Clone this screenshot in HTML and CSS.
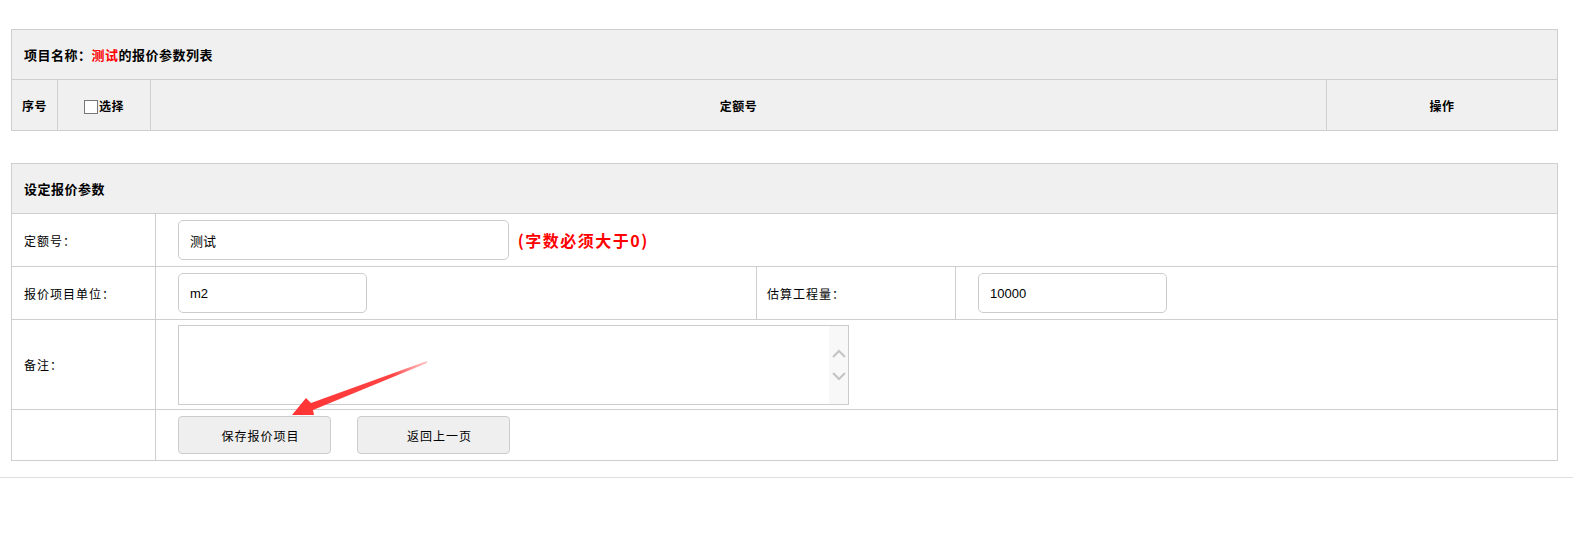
FILE: index.html
```html
<!DOCTYPE html>
<html lang="zh-CN">
<head>
    <meta charset="UTF-8">
    <title>报价参数</title>
    <link rel="stylesheet" href="styles.css">
</head>
<body>
    <div class="page">
        <table class="grid list">
            <colgroup>
                <col class="w-no">
                <col class="w-sel">
                <col>
                <col class="w-op">
            </colgroup>
            <tr>
                <th class="caption" colspan="4">项目名称：<span class="red">测试</span>的报价参数列表</th>
            </tr>
            <tr class="head">
                <th>序号</th>
                <th><input type="checkbox" class="chk">选择</th>
                <th>定额号</th>
                <th>操作</th>
            </tr>
        </table>

        <table class="grid form">
            <colgroup>
                <col class="w-label">
                <col class="w-unit">
                <col class="w-label2">
                <col>
            </colgroup>
            <tr>
                <th class="caption" colspan="4">设定报价参数</th>
            </tr>
            <tr class="row">
                <td class="label">定额号：</td>
                <td class="field" colspan="3">
                    <input type="text" class="txt txt-long" value="测试">
                    <span class="hint">(字数必须大于0)</span>
                </td>
            </tr>
            <tr class="row">
                <td class="label">报价项目单位：</td>
                <td class="field"><input type="text" class="txt txt-short" value="m2"></td>
                <td class="label label2">估算工程量：</td>
                <td class="field"><input type="text" class="txt txt-short" value="10000"></td>
            </tr>
            <tr class="row-tall">
                <td class="label">备注：</td>
                <td class="field" colspan="3">
                    <div class="memo">
                        <textarea class="memo-text"></textarea>
                        <div class="memo-bar">
                            <svg width="14" height="9" viewBox="0 0 14 9"><path d="M1 8 L7 2 L13 8" fill="none" stroke="#c4c4c4" stroke-width="2"/></svg>
                            <svg width="14" height="9" viewBox="0 0 14 9"><path d="M1 1 L7 7 L13 1" fill="none" stroke="#c4c4c4" stroke-width="2"/></svg>
                        </div>
                    </div>
                </td>
            </tr>
            <tr class="row-btn">
                <td class="label"></td>
                <td class="field" colspan="3">
                    <div class="actions">
                        <button class="btn">保存报价项目</button>
                        <button class="btn">返回上一页</button>
                    </div>
                </td>
            </tr>
        </table>
    </div>
    <div class="footer"></div>

    <!-- annotation arrow drawn over the form -->
    <svg class="arrow" width="150" height="70" viewBox="285 355 150 70">
        <defs>
            <linearGradient id="fade" x1="292" y1="415" x2="427" y2="361" gradientUnits="userSpaceOnUse">
                <stop offset="0" stop-color="#ff3434"/>
                <stop offset="0.75" stop-color="#ff4444"/>
                <stop offset="1" stop-color="#ff8a8a" stop-opacity="0.5"/>
            </linearGradient>
        </defs>
        <polygon fill="url(#fade)" points="427,361 311,403 306,398 292,415 314,415 313,410 427,363"/>
    </svg>
</body>
</html>
```

FILE: styles.css
```css
body {
    margin: 0;
    padding: 0;
    font-family: "Noto Sans CJK SC", "Liberation Sans", sans-serif;
    font-size: 12px;
    color: #000;
    background: #fff;
}
.page {
    padding: 29px 15px 0 11px;
}
.grid {
    width: 100%;
    border-collapse: collapse;
    table-layout: fixed;
}
.grid th,
.grid td {
    border: 1px solid #cfcfcf;
    padding: 0;
    vertical-align: middle;
}
.grid th {
    background: #f0f0f0;
    font-weight: bold;
    font-size: 12px;
    letter-spacing: 0.5px;
}
.caption {
    height: 49px;
    text-align: left;
    padding-left: 12px !important;
    font-size: 13px !important;
    letter-spacing: 0.5px;
}
.red {
    color: #f00;
}
.head th {
    height: 50px;
    text-align: center;
}
.w-no {
    width: 46px;
}
.w-sel {
    width: 93px;
}
.w-op {
    width: 231px;
}
.w-label {
    width: 144px;
}
.w-unit {
    width: 601px;
}
.w-label2 {
    width: 199px;
}
.chk {
    appearance: none;
    -webkit-appearance: none;
    width: 14px;
    height: 14px;
    margin: 0 1px 0 0;
    border: 1px solid #777;
    background: #fff;
    vertical-align: -3px;
}
.form {
    margin-top: 32px;
}
.form .label {
    padding-left: 12px;
    letter-spacing: 1px;
}
.form .label2 {
    padding-left: 10px;
}
.row td {
    height: 52px;
}
.row-tall td {
    height: 89px;
}
.row-btn td {
    height: 50px;
}
.field {
    padding-left: 22px !important;
}
.txt {
    box-sizing: border-box;
    height: 40px;
    border: 1px solid #ccc;
    border-radius: 5px;
    padding: 0 11px;
    font-family: "Liberation Sans", "Noto Sans CJK SC", sans-serif;
    font-size: 13px;
    color: #000;
    vertical-align: middle;
}
.txt-long {
    width: 331px;
}
.txt-short {
    width: 189px;
}
.hint {
    color: #f00;
    font-weight: bold;
    font-size: 16px;
    letter-spacing: 1.5px;
    margin-left: 6px;
    vertical-align: middle;
}
.memo {
    display: flex;
    width: 671px;
    height: 80px;
    box-sizing: border-box;
    border: 1px solid #ccc;
}
.memo-text {
    flex: 1;
    border: none;
    resize: none;
    outline: none;
    padding: 0;
}
.memo-bar {
    width: 19px;
    background: #f8f8f8;
    display: flex;
    flex-direction: column;
    justify-content: center;
    align-items: center;
    gap: 14px;
}
.actions {
    display: flex;
    gap: 26px;
}
.btn {
    box-sizing: border-box;
    width: 153px;
    height: 38px;
    padding: 0 0 0 12px;
    background: #efefef;
    border: 1px solid #ccc;
    border-radius: 4px;
    font-family: "Noto Sans CJK SC", sans-serif;
    font-size: 12px;
    letter-spacing: 1px;
    color: #000;
}
.footer {
    margin-top: 16px;
    border-top: 1px solid #dedede;
}
.arrow {
    position: absolute;
    left: 285px;
    top: 355px;
}
```
